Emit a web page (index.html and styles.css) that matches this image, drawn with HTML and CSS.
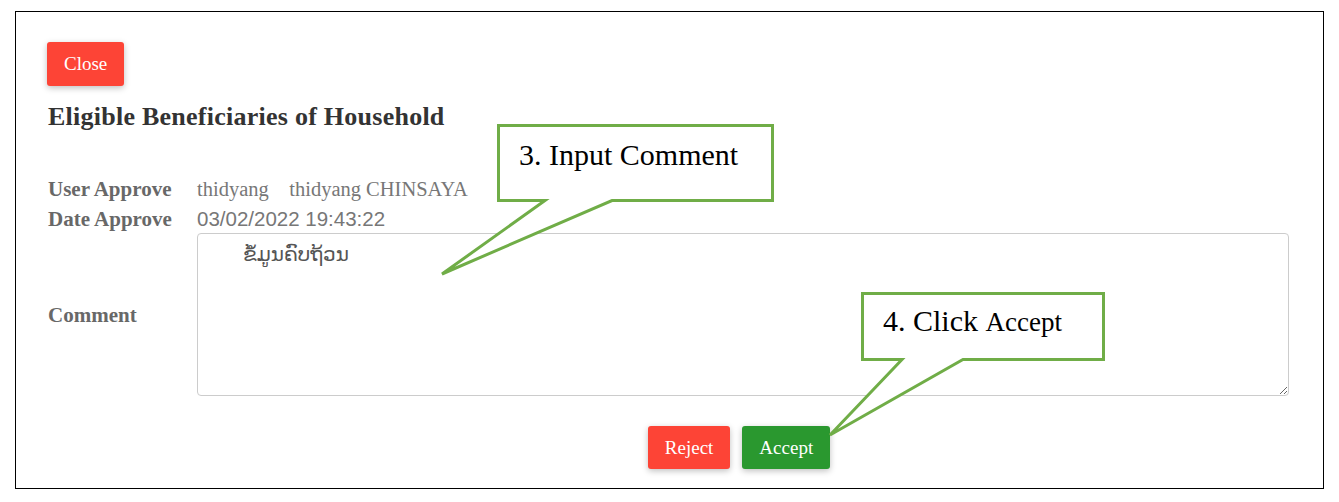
FILE: index.html
```html
<!DOCTYPE html>
<html>

<head>
    <meta charset="UTF-8">
    <title>Eligible Beneficiaries of Household</title>
    <link rel="stylesheet" href="styles.css">
</head>

<body>
    <div id="frame">
        <button class="btn btn_red">Close</button>
        <h3 id="title">Eligible Beneficiaries of Household</h3>
        <div id="form">
            <div class="label">User Approve</div>
            <div class="value">thidyang&nbsp;&nbsp;&nbsp; thidyang CHINSAYA</div>
            <div class="label">Date Approve</div>
            <div class="value date">03/02/2022 19:43:22</div>
            <div class="label">Comment</div>
            <textarea id="comment">ຂໍ້ມູນຄົບຖ້ວນ</textarea>
            <div id="actions">
                <button class="btn btn_red">Reject</button>
                <button class="btn btn_green">Accept</button>
            </div>
        </div>

        <div class="callout" id="callout3">
            <svg width="277" height="78">
                <path d="M1.5 1.5 H275.5 V76.5 H115 L-55 150 L48 76.5 H1.5 Z" />
            </svg>
            <p>3. Input Comment</p>
        </div>
        <div class="callout" id="callout4">
            <svg width="244" height="69">
                <path d="M1.5 1.5 H242.5 V67.5 H102 L-31 143 L41 67.5 H1.5 Z" />
            </svg>
            <p>4. Click <span class="small">Accept</span></p>
        </div>
    </div>
</body>

</html>
```

FILE: styles.css
```css
* {
    margin: 0;
    padding: 0;
    box-sizing: border-box;
}

body {
    background: white;
    font-family: "Liberation Serif", "Times New Roman", serif;
}

#frame {
    position: relative;
    margin: 11px 0 0 15px;
    width: 1309px;
    height: 478px;
    border: 1px solid black;
    padding: 30px 34px 0 31px;
}

.btn {
    height: 44px;
    padding: 0 17px;
    border: none;
    border-radius: 3px;
    color: white;
    font-family: "Liberation Serif", serif;
    font-size: 19px;
    box-shadow: 0 2px 6px rgba(0, 0, 0, 0.25);
}

.btn_red {
    background: #fd4436;
}

.btn_green {
    background: #2a982f;
}

#title {
    margin: 16px 0 42px 1px;
    font-size: 26px;
    line-height: 30px;
    letter-spacing: 0.25px;
    color: #333;
}

#form {
    display: grid;
    grid-template-columns: 149px 1fr;
    align-items: center;
    padding-left: 1px;
}

.label {
    font-size: 21px;
    line-height: 30px;
    font-weight: bold;
    color: #686868;
}

.value {
    font-size: 20.5px;
    line-height: 30px;
    color: #777;
}

.value.date {
    font-family: "Liberation Sans", Arial, sans-serif;
    font-size: 20.5px;
}

#comment {
    height: 163px;
    margin-top: -1px;
    border: 1px solid #ccc;
    border-radius: 4px;
    padding: 8px 12px;
    text-indent: 33px;
    font-family: "DejaVu Sans", "Noto Sans", sans-serif;
    font-size: 20px;
    color: #555;
    resize: both;
}

#actions {
    grid-column: 2;
    display: flex;
    justify-content: center;
    gap: 12px;
    margin-top: 30px;
    padding-right: 8px;
}

#actions .btn {
    height: 43px;
}

.callout {
    position: absolute;
}

.callout svg {
    position: absolute;
    top: 0;
    left: 0;
    overflow: visible;
}

.callout path {
    fill: white;
    stroke: #70ad47;
    stroke-width: 3;
}

.callout p {
    position: relative;
    font-family: "Liberation Serif", serif;
    font-size: 30px;
    color: black;
    white-space: nowrap;
}

#callout3 {
    left: 481px;
    top: 112px;
    width: 277px;
    height: 78px;
}

#callout3 p {
    padding: 14px 0 0 22px;
}

#callout4 {
    left: 845px;
    top: 280px;
    width: 244px;
    height: 69px;
}

#callout4 p {
    padding: 12px 0 0 22px;
}

.small {
    font-size: 27px;
}
```
